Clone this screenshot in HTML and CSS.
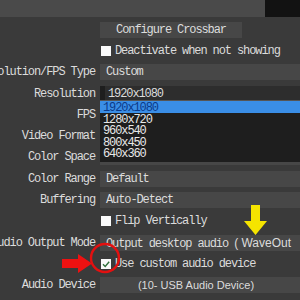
FILE: index.html
```html
<!DOCTYPE html>
<html lang="en">
<head>
    <meta charset="UTF-8">
    <title>Device Properties</title>
    <link rel="stylesheet" href="styles.css">
</head>
<body>
    <div class="topbar">
        <div class="preview"></div>
    </div>

    <div class="form">
        <div class="row">
            <div class="label"></div>
            <div class="value"><div class="button">Configure Crossbar</div></div>
        </div>
        <div class="row">
            <div class="label"></div>
            <div class="value"><span class="check"></span>Deactivate when not showing</div>
        </div>
        <div class="row">
            <div class="label">Resolution/FPS Type</div>
            <div class="value"><div class="field">Custom</div></div>
        </div>
        <div class="row">
            <div class="label">Resolution</div>
            <div class="value"><div class="field edit">1920x1080</div></div>
        </div>
        <div class="row">
            <div class="label">FPS</div>
            <div class="value"><div class="field"></div></div>
        </div>
        <div class="row">
            <div class="label">Video Format</div>
            <div class="value"><div class="field"></div></div>
        </div>
        <div class="row">
            <div class="label">Color Space</div>
            <div class="value"><div class="field">Default</div></div>
        </div>
        <div class="row">
            <div class="label">Color Range</div>
            <div class="value"><div class="field">Default</div></div>
        </div>
        <div class="row">
            <div class="label">Buffering</div>
            <div class="value"><div class="field">Auto-Detect</div></div>
        </div>
        <div class="row">
            <div class="label"></div>
            <div class="value"><span class="check"></span>Flip Vertically</div>
        </div>
        <div class="row">
            <div class="label">Audio Output Mode</div>
            <div class="value"><div class="field">Output desktop audio <span class="sans">( WaveOut</span></div></div>
        </div>
        <div class="row">
            <div class="label"></div>
            <div class="value"><span class="check">
                <svg width="10" height="10" viewBox="0 0 10 10"><path d="M2 5.2 L4.2 7.4 L8.2 2.8" fill="none" stroke="#2f6f3a" stroke-width="1.4"/></svg>
            </span>Use custom audio device</div>
        </div>
        <div class="row">
            <div class="label">Audio Device</div>
            <div class="value"><div class="field center sans">(10- USB Audio Device)</div></div>
        </div>

        <!-- open resolution list -->
        <ul class="dropdown">
            <li class="selected">1920x1080</li>
            <li>1280x720</li>
            <li>960x540</li>
            <li>800x450</li>
            <li>640x360</li>
        </ul>
    </div>

    <!-- annotations drawn over the screenshot -->
    <svg class="marks" width="300" height="300" viewBox="0 0 300 300">
        <path d="M251 205 H260 V221 H267 L255.5 235 L244 221 H251 Z" fill="#f5e400"/>
        <path d="M62 259 H78 V254 L92 263.5 L78 273 V268 H62 Z" fill="#ee1111"/>
        <circle cx="105" cy="258" r="14" fill="none" stroke="#e31010" stroke-width="2.4"/>
    </svg>
</body>
</html>
```

FILE: styles.css
```css
body {
    margin: 0;
    width: 300px;
    height: 300px;
    overflow: hidden;
    background: #3a3a3a;
    color: #dcdcdc;
    font-family: "Liberation Mono", monospace;
    font-size: 12px;
    letter-spacing: -1.1px;
    position: relative;
}
.topbar {
    height: 17px;
    background: #4a4a4a;
    display: flex;
    justify-content: flex-end;
}
.preview {
    width: 35px;
    background: #121212;
}
.form {
    position: relative;
    padding-top: 2px;
}
.row {
    display: grid;
    grid-template-columns: 95px 1fr;
    column-gap: 5px;
    height: 21.3px;
    align-items: center;
}
.label {
    display: flex;
    justify-content: flex-end;
    white-space: nowrap;
}
.value {
    display: flex;
    align-items: center;
    white-space: nowrap;
}
.button {
    width: 142px;
    height: 16px;
    line-height: 16px;
    background: #474747;
    text-align: center;
}
.check {
    width: 10px;
    height: 10px;
    background: #fafafa;
    margin: 0 4px 0 1px;
    display: flex;
}
.field {
    flex: 1;
    height: 16px;
    line-height: 16px;
    background: #474747;
    padding-left: 6px;
}
.field.edit {
    background: #2d2d2d;
    border-left: 5px solid #1e1e1e;
    padding-left: 3px;
}
.field.center {
    text-align: center;
    padding-left: 0;
    padding-right: 8px;
    font-size: 11px;
}
.sans {
    font-family: "Liberation Sans", Arial, sans-serif;
    letter-spacing: 0;
}
.dropdown {
    position: absolute;
    left: 100px;
    top: 83px;
    width: 210px;
    margin: 0;
    padding: 0 0 3px;
    list-style: none;
    background: #1e1e1e;
    border-top: 1px solid #555;
}
.dropdown li {
    height: 11.5px;
    line-height: 15px;
    padding-left: 3px;
    color: #e8e8e8;
}
.dropdown li.selected {
    background: #3a8ee6;
    color: #0b3a8a;
}
.marks {
    position: absolute;
    left: 0;
    top: 0;
}
```
